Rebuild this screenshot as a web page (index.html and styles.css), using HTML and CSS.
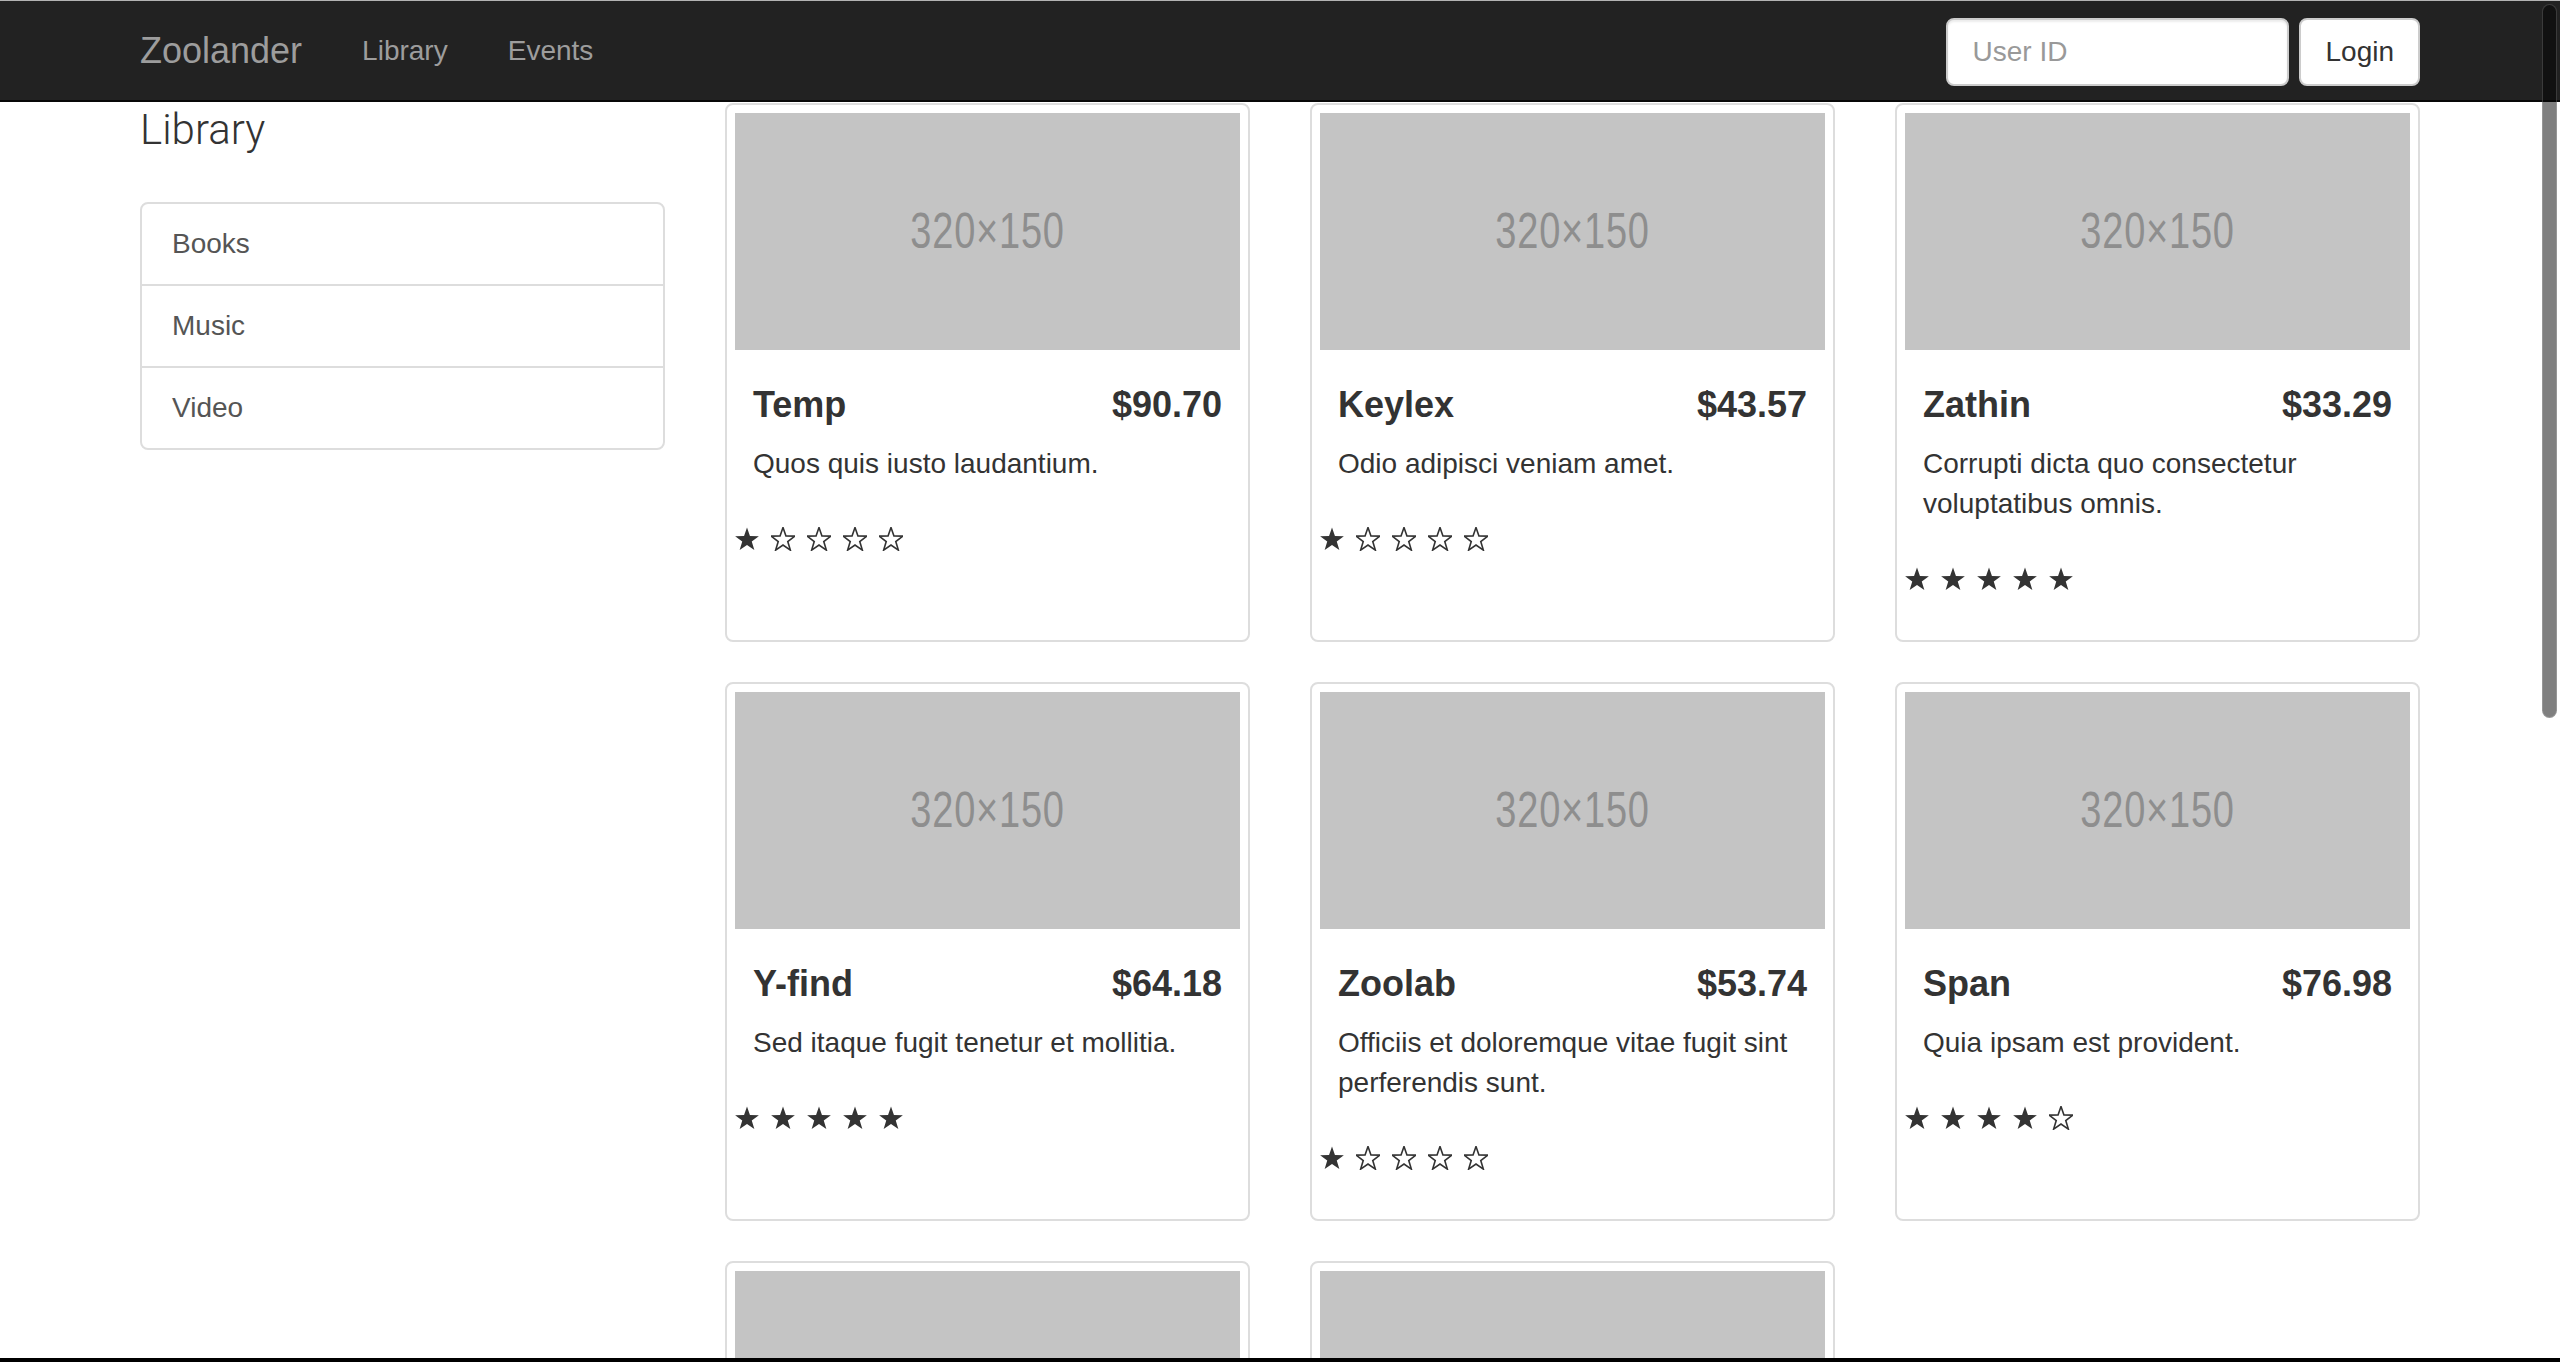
FILE: index.html
```html
<!DOCTYPE html>
<html lang="en">
<head>
<meta charset="utf-8">
<title>Zoolander</title>
<link rel="stylesheet" href="styles.css">
</head>
<body>
<svg class="defs" width="0" height="0" aria-hidden="true">
  <symbol id="star" viewBox="0 0 24 24">
    <path d="M12 0.5 L14.94 8.96 L23.89 9.14 L16.76 14.55 L19.35 23.11 L12 18 L4.65 23.11 L7.24 14.55 L0.11 9.14 L9.06 8.96 Z"/>
  </symbol>
</svg>

<nav class="navbar">
  <div class="container nav-inner">
    <div class="nav-left">
      <a class="brand" href="#">Zoolander</a>
      <a class="nav-link" href="#">Library</a>
      <a class="nav-link" href="#">Events</a>
    </div>
    <form class="nav-form">
      <input class="input" type="text" placeholder="User ID">
      <button class="btn" type="button">Login</button>
    </form>
  </div>
</nav>

<main class="container layout">
  <aside class="sidebar">
    <p class="lead">Library</p>
    <div class="list-group">
      <a class="list-item" href="#">Books</a>
      <a class="list-item" href="#">Music</a>
      <a class="list-item" href="#">Video</a>
    </div>
  </aside>

  <section class="cards">
    <div class="card">
      <div class="ph"><span>320×150</span></div>
      <div class="caption">
        <h4 class="title"><span>Temp</span><span>$90.70</span></h4>
        <p class="desc">Quos quis iusto laudantium.</p>
      </div>
      <div class="ratings">
        <svg class="star full"><use href="#star"/></svg><svg class="star empty"><use href="#star"/></svg><svg class="star empty"><use href="#star"/></svg><svg class="star empty"><use href="#star"/></svg><svg class="star empty"><use href="#star"/></svg>
      </div>
    </div>

    <div class="card">
      <div class="ph"><span>320×150</span></div>
      <div class="caption">
        <h4 class="title"><span>Keylex</span><span>$43.57</span></h4>
        <p class="desc">Odio adipisci veniam amet.</p>
      </div>
      <div class="ratings">
        <svg class="star full"><use href="#star"/></svg><svg class="star empty"><use href="#star"/></svg><svg class="star empty"><use href="#star"/></svg><svg class="star empty"><use href="#star"/></svg><svg class="star empty"><use href="#star"/></svg>
      </div>
    </div>

    <div class="card">
      <div class="ph"><span>320×150</span></div>
      <div class="caption">
        <h4 class="title"><span>Zathin</span><span>$33.29</span></h4>
        <p class="desc">Corrupti dicta quo consectetur voluptatibus omnis.</p>
      </div>
      <div class="ratings">
        <svg class="star full"><use href="#star"/></svg><svg class="star full"><use href="#star"/></svg><svg class="star full"><use href="#star"/></svg><svg class="star full"><use href="#star"/></svg><svg class="star full"><use href="#star"/></svg>
      </div>
    </div>

    <div class="card">
      <div class="ph"><span>320×150</span></div>
      <div class="caption">
        <h4 class="title"><span>Y-find</span><span>$64.18</span></h4>
        <p class="desc">Sed itaque fugit tenetur et mollitia.</p>
      </div>
      <div class="ratings">
        <svg class="star full"><use href="#star"/></svg><svg class="star full"><use href="#star"/></svg><svg class="star full"><use href="#star"/></svg><svg class="star full"><use href="#star"/></svg><svg class="star full"><use href="#star"/></svg>
      </div>
    </div>

    <div class="card">
      <div class="ph"><span>320×150</span></div>
      <div class="caption">
        <h4 class="title"><span>Zoolab</span><span>$53.74</span></h4>
        <p class="desc">Officiis et doloremque vitae fugit sint perferendis sunt.</p>
      </div>
      <div class="ratings">
        <svg class="star full"><use href="#star"/></svg><svg class="star empty"><use href="#star"/></svg><svg class="star empty"><use href="#star"/></svg><svg class="star empty"><use href="#star"/></svg><svg class="star empty"><use href="#star"/></svg>
      </div>
    </div>

    <div class="card">
      <div class="ph"><span>320×150</span></div>
      <div class="caption">
        <h4 class="title"><span>Span</span><span>$76.98</span></h4>
        <p class="desc">Quia ipsam est provident.</p>
      </div>
      <div class="ratings">
        <svg class="star full"><use href="#star"/></svg><svg class="star full"><use href="#star"/></svg><svg class="star full"><use href="#star"/></svg><svg class="star full"><use href="#star"/></svg><svg class="star empty"><use href="#star"/></svg>
      </div>
    </div>

    <div class="card">
      <div class="ph"><span>320×150</span></div>
      <div class="caption">
        <h4 class="title"><span>Bitwolf</span><span>$21.45</span></h4>
        <p class="desc">Voluptas at aut dolorem.</p>
      </div>
      <div class="ratings">
        <svg class="star full"><use href="#star"/></svg><svg class="star full"><use href="#star"/></svg><svg class="star empty"><use href="#star"/></svg><svg class="star empty"><use href="#star"/></svg><svg class="star empty"><use href="#star"/></svg>
      </div>
    </div>

    <div class="card">
      <div class="ph"><span>320×150</span></div>
      <div class="caption">
        <h4 class="title"><span>Tresom</span><span>$58.12</span></h4>
        <p class="desc">Eius nemo quae sed.</p>
      </div>
      <div class="ratings">
        <svg class="star full"><use href="#star"/></svg><svg class="star full"><use href="#star"/></svg><svg class="star full"><use href="#star"/></svg><svg class="star empty"><use href="#star"/></svg><svg class="star empty"><use href="#star"/></svg>
      </div>
    </div>
  </section>
</main>

<div class="scroll-thumb"></div>
<div class="frame-bottom"></div>
</body>
</html>
```

FILE: styles.css
```css
* { box-sizing: border-box; }

html, body {
  margin: 0;
  overflow: hidden;
}

body {
  font-family: "Liberation Sans", Arial, sans-serif;
  font-size: 28px;
  line-height: 40px;
  color: #333;
  background: #fff;
}

.defs { position: absolute; width: 0; height: 0; overflow: hidden; }

a { text-decoration: none; }

/* ---------- navbar ---------- */
.navbar {
  background: #222;
  border-top: 1px solid #b3b3b3;
  border-bottom: 2px solid #080808;
  height: 102px;
}

.container {
  width: 2340px;
  margin: 0 auto;
  padding: 0 30px;
}

.nav-inner {
  display: flex;
  align-items: center;
  justify-content: space-between;
  height: 99px;
}

.nav-left {
  display: flex;
  align-items: center;
}

.brand {
  font-size: 36px;
  line-height: 40px;
  color: #9d9d9d;
  padding-right: 30px;
}

.nav-link {
  font-size: 28px;
  line-height: 40px;
  color: #9d9d9d;
  padding: 0 30px;
}

.nav-form {
  display: flex;
  align-items: center;
  gap: 10px;
  margin: 0;
  padding-top: 3px;
}

.input {
  width: 343px;
  height: 68px;
  border: 2px solid #ccc;
  border-radius: 8px;
  padding: 0 24px;
  font-family: "Liberation Sans", Arial, sans-serif;
  font-size: 28px;
  color: #555;
  background: #fff;
  box-shadow: inset 0 2px 2px rgba(0,0,0,.075);
  outline: none;
}

.input::placeholder { color: #999; }

.btn {
  height: 68px;
  padding: 0 24px;
  border: 2px solid #ccc;
  border-radius: 8px;
  background: #fff;
  font-family: "Liberation Sans", Arial, sans-serif;
  font-size: 28px;
  color: #333;
}

/* ---------- layout ---------- */
.layout {
  display: grid;
  grid-template-columns: 525px 1695px;
  column-gap: 60px;
  padding-top: 1px;
}

.lead {
  font-family: Roboto, "Liberation Sans", sans-serif;
  font-weight: 300;
  font-size: 42px;
  line-height: 58.8px;
  margin: -2px 0 42px;
  color: #333;
}

.list-group {
  border: 2px solid #ddd;
  border-radius: 8px;
  display: flex;
  flex-direction: column;
}

.list-item {
  display: block;
  padding: 20px 30px;
  color: #555;
  font-size: 28px;
  line-height: 40px;
}

.list-item + .list-item { border-top: 2px solid #ddd; }

/* ---------- cards ---------- */
.cards {
  display: grid;
  grid-template-columns: repeat(3, 525px);
  column-gap: 60px;
  row-gap: 40px;
  align-content: start;
}

.card {
  height: 539px;
  border: 2px solid #ddd;
  border-radius: 8px;
  padding: 8px;
  background: #fff;
}

.ph {
  aspect-ratio: 320 / 150;
  background: #c4c4c4;
  display: flex;
  align-items: center;
  justify-content: center;
}

.ph span {
  font-family: "Liberation Sans", Arial, sans-serif;
  font-size: 50px;
  line-height: 50px;
  color: #8e8e8e;
  transform: scaleX(0.76);
  letter-spacing: 1px;
}

.caption {
  padding: 18px 18px 21px;
}

.title {
  display: flex;
  justify-content: space-between;
  margin: 17px 0 20px;
  font-size: 36px;
  line-height: 39.6px;
  font-weight: 700;
  color: #333;
}

.desc {
  margin: 0 0 20px;
}

.ratings {
  display: flex;
  align-items: center;
  gap: 12px;
  height: 28px;
}

.star {
  width: 24px;
  height: 24px;
  display: block;
}

.star.full { fill: #333; }

.star.empty {
  fill: none;
  stroke: #333;
  stroke-width: 1.6;
  stroke-linejoin: miter;
}

/* ---------- window overlays ---------- */
.scroll-thumb {
  position: fixed;
  top: 4px;
  right: 3px;
  width: 15px;
  height: 714px;
  border-radius: 8px;
  background: rgba(0,0,0,.5);
  border: 1px solid rgba(255,255,255,.18);
}

.frame-bottom {
  position: fixed;
  left: 0;
  right: 0;
  bottom: 0;
  height: 4px;
  background: #000;
}
```
